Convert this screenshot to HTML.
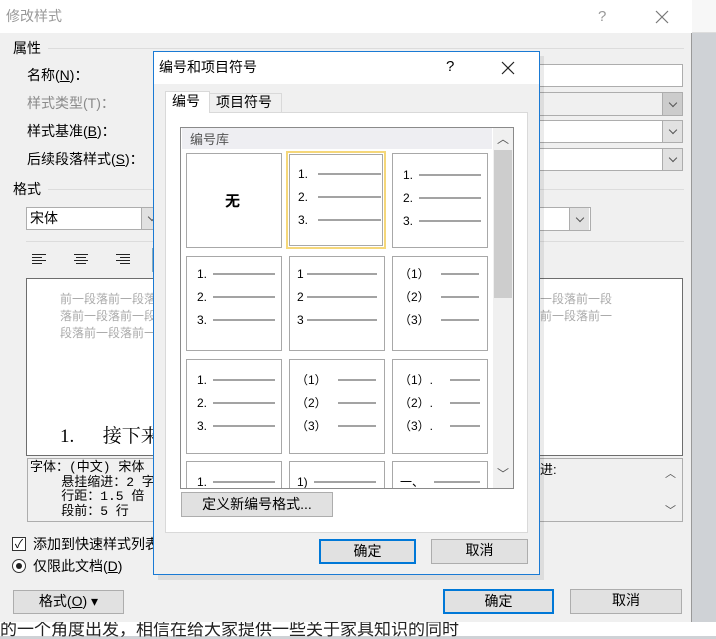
<!DOCTYPE html>
<html><head><meta charset="utf-8"><style>
*{margin:0;padding:0;box-sizing:border-box}
body{width:716px;height:636px;position:relative;overflow:hidden;background:#cfd2d6;font-family:"Liberation Sans","Noto Sans CJK SC",sans-serif;font-size:14px;color:#000}
.a{position:absolute}
.t{position:absolute;white-space:nowrap;line-height:17px}
.box{position:absolute;background:#fff;border:1px solid #7a7a7a}
.dd{position:absolute;width:20px;border-left:1px solid #adadad;background:#e1e1e1;display:flex;align-items:center;justify-content:center}
.dd:after{content:"";width:5px;height:5px;border-right:1px solid #555;border-bottom:1px solid #555;transform:rotate(45deg);margin-top:-3px}
.btn{position:absolute;background:#e1e1e1;border:1px solid #adadad;text-align:center;line-height:21px}
.cell{position:absolute;width:96px;height:95px;border:1px solid #a8a8a8;background:#fff}
.cell .n{position:absolute;left:10px;font-size:12px;line-height:14px}
.cell .l{position:absolute;height:2px;background:#a3a3a3}
.al{position:absolute;height:1px;background:#222}
</style></head><body>
<div class="a" style="left:692px;top:0;width:24px;height:33px;background:#f7f7f7;border-bottom:1px solid #ddd"></div>
<div class="a" style="left:0;top:622px;width:716px;height:14px;background:#fff"></div>
<div class="t" style="left:0;top:621px;font-size:17px;color:#222">的一个角度出发，相信在给大家提供一些关于家具知识的同时</div>
<div class="a" style="left:0;top:0;width:692px;height:622px;background:#f0f0f0;border-right:1px solid #999"></div>
<div class="a" style="left:0;top:0;width:692px;height:33px;background:#fff"></div>
<div class="t" style="left:6px;top:8px;font-size:14px;color:#999">修改样式</div>
<div class="t" style="left:598px;top:8px;font-size:15px;color:#999">?</div>
<svg class="a" style="left:655px;top:10px" width="14" height="14"><path d="M1 1L13 13M13 1L1 13" stroke="#777" stroke-width="1.2"/></svg>
<div class="t" style="left:13px;top:40px">属性</div>
<div class="a" style="left:48px;top:48px;width:636px;height:1px;background:#dcdcdc"></div>
<div class="t" style="left:27px;top:67px">名称(<u>N</u>)：</div>
<div class="t" style="left:27px;top:95px;color:#8a8a8a">样式类型(T)：</div>
<div class="t" style="left:27px;top:123px">样式基准(<u>B</u>)：</div>
<div class="t" style="left:27px;top:151px">后续段落样式(<u>S</u>)：</div>
<div class="box" style="left:530px;top:64px;width:153px;height:23px;border-color:#adadad"></div>
<div class="box" style="left:530px;top:92px;width:153px;height:24px;border-color:#adadad;background:#f0f0f0"></div>
<div class="dd" style="left:662px;top:93px;height:22px;background:#ccc"></div>
<div class="box" style="left:530px;top:120px;width:153px;height:23px;border-color:#adadad"></div>
<div class="dd" style="left:662px;top:121px;height:21px"></div>
<div class="box" style="left:530px;top:148px;width:153px;height:23px;border-color:#adadad"></div>
<div class="dd" style="left:662px;top:149px;height:21px"></div>
<div class="t" style="left:13px;top:181px">格式</div>
<div class="a" style="left:48px;top:189px;width:636px;height:1px;background:#dcdcdc"></div>
<div class="box" style="left:26px;top:207px;width:132px;height:23px;border-color:#adadad"></div>
<div class="t" style="left:30px;top:210px">宋体</div>
<div class="dd" style="left:141px;top:208px;height:21px"></div>
<div class="box" style="left:530px;top:207px;width:61px;height:24px;border-color:#adadad"></div>
<div class="dd" style="left:569px;top:208px;height:22px"></div>
<div class="a" style="left:26px;top:241px;width:658px;height:1px;background:#dcdcdc"></div>
<div class="al" style="left:32px;top:254px;width:14px"></div><div class="al" style="left:32px;top:257px;width:10px"></div><div class="al" style="left:32px;top:260px;width:14px"></div><div class="al" style="left:32px;top:263px;width:10px"></div>
<div class="al" style="left:74px;top:254px;width:14px"></div><div class="al" style="left:76px;top:257px;width:10px"></div><div class="al" style="left:74px;top:260px;width:14px"></div><div class="al" style="left:76px;top:263px;width:10px"></div>
<div class="al" style="left:116px;top:254px;width:14px"></div><div class="al" style="left:120px;top:257px;width:10px"></div><div class="al" style="left:116px;top:260px;width:14px"></div><div class="al" style="left:120px;top:263px;width:10px"></div>
<div class="a" style="left:152px;top:248px;width:4px;height:24px;background:#cde4f7;border:1px solid #8ab"></div>
<div class="box" style="left:26px;top:278px;width:657px;height:178px;border-color:#6d6d6d"></div>
<div class="t" style="left:60px;top:291px;font-size:12px;color:#aaa;line-height:17px">前一段落前一段落<br>落前一段落前一段<br>段落前一段落前一</div>
<div class="t" style="left:540px;top:291px;font-size:12px;color:#aaa;line-height:17px">一段落前一段<br>前一段落前一</div>
<div class="t" style="left:60px;top:425px;font-size:19px;font-family:'Liberation Serif','Noto Serif CJK SC',serif;line-height:24px">1.&nbsp;&nbsp;&nbsp;&nbsp;&nbsp;&nbsp;接下来</div>
<div class="box" style="left:27px;top:458px;width:656px;height:64px;border-color:#adadad;background:#f0f0f0"></div>
<div class="t" style="left:30px;top:461px;font-size:13px;line-height:14.5px;font-family:'Liberation Mono','Noto Sans CJK SC',monospace">字体：(中文) 宋体<br>&nbsp;&nbsp;&nbsp;&nbsp;悬挂缩进：2 字<br>&nbsp;&nbsp;&nbsp;&nbsp;行距：1.5 倍<br>&nbsp;&nbsp;&nbsp;&nbsp;段前：5 行</div>
<div class="t" style="left:540px;top:461px;font-size:13px">进:</div>
<div class="t" style="left:665px;top:466px;font-size:11px;color:#555">︿</div>
<div class="t" style="left:665px;top:503px;font-size:11px;color:#555">﹀</div>
<div class="a" style="left:12px;top:537px;width:14px;height:14px;border:1px solid #333;background:#fff;font-size:12px;line-height:12px;text-align:center">✓</div>
<div class="t" style="left:33px;top:536px">添加到快速样式列表</div>
<div class="a" style="left:12px;top:559px;width:14px;height:14px;border:1px solid #333;border-radius:50%;background:#fff"><div class="a" style="left:3px;top:3px;width:6px;height:6px;border-radius:50%;background:#222"></div></div>
<div class="t" style="left:33px;top:558px">仅限此文档(<u>D</u>)</div>
<div class="btn" style="left:13px;top:590px;width:111px;height:24px">格式(<u>O</u>) ▾</div>
<div class="btn" style="left:443px;top:589px;width:111px;height:25px;border:2px solid #0078d7">确定</div>
<div class="btn" style="left:570px;top:589px;width:112px;height:25px">取消</div>
<div class="a" style="left:158px;top:56px;width:386px;height:524px;background:rgba(0,0,0,0.08)"></div>
<div class="a" style="left:153px;top:51px;width:387px;height:524px;background:#f0f0f0;border:1px solid #1a7ad4"></div>
<div class="a" style="left:154px;top:52px;width:385px;height:32px;background:#fff"></div>
<div class="t" style="left:159px;top:59px;font-size:14px">编号和项目符号</div>
<div class="t" style="left:446px;top:58px;font-size:15px">?</div>
<svg class="a" style="left:501px;top:61px" width="14" height="14"><path d="M1 1L13 13M13 1L1 13" stroke="#222" stroke-width="1.2"/></svg>
<div class="a" style="left:165px;top:112px;width:363px;height:421px;background:#fff;border:1px solid #d9d9d9"></div>
<div class="a" style="left:209px;top:93px;width:73px;height:20px;background:#f0f0f0;border:1px solid #d9d9d9"></div>
<div class="t" style="left:216px;top:94px;font-size:14px">项目符号</div>
<div class="a" style="left:165px;top:91px;width:45px;height:22px;background:#fff;border:1px solid #d9d9d9;border-bottom:none"></div>
<div class="t" style="left:172px;top:93px;font-size:14px">编号</div>
<div class="a" style="left:180px;top:127px;width:334px;height:362px;background:#fff;border:1px solid #8a8a8a;overflow:hidden">
 <div class="a" style="left:1px;top:0;width:310px;height:21px;background:#eeeef2"></div>
 <div class="t" style="left:9px;top:3px;font-size:13px;color:#555">编号库</div>
 <div class="a" style="left:312px;top:0;width:20px;height:360px;background:#f0f0f0"></div>
 <div class="a" style="left:313px;top:22px;width:18px;height:148px;background:#cdcdcd"></div>
 <div class="t" style="left:316px;top:3px;font-size:12px;color:#555">︿</div>
 <div class="t" style="left:316px;top:338px;font-size:12px;color:#555">﹀</div>
</div>
<div class="a" style="left:181px;top:128px;width:310px;height:360px;overflow:hidden">
 <div class="cell" style="left:5px;top:25px;"><div class="t" style="left:38px;top:39px;font-size:15px;font-weight:bold">无</div></div>
 <div class="cell" style="left:105px;top:23px;width:100px;height:98px;border:2px solid #f5d77a;box-shadow:inset 0 0 0 1px #fff,inset 0 0 0 2px #a8a8a8"></div>
 <div class="cell" style="left:107px;top:25px;border:none;background:transparent">
  <div class="n" style="top:14px">1.</div><div class="l" style="left:30px;top:20px;width:63px"></div>
  <div class="n" style="top:37px">2.</div><div class="l" style="left:30px;top:43px;width:63px"></div>
  <div class="n" style="top:60px">3.</div><div class="l" style="left:30px;top:66px;width:63px"></div></div>
 <div class="cell" style="left:211px;top:25px">
  <div class="n" style="top:14px">1.</div><div class="l" style="left:26px;top:20px;width:62px"></div>
  <div class="n" style="top:37px">2.</div><div class="l" style="left:26px;top:43px;width:62px"></div>
  <div class="n" style="top:60px">3.</div><div class="l" style="left:26px;top:66px;width:62px"></div></div>
 <div class="cell" style="left:5px;top:128px">
  <div class="n" style="top:10px">1.</div><div class="l" style="left:26px;top:16px;width:62px"></div>
  <div class="n" style="top:33px">2.</div><div class="l" style="left:26px;top:39px;width:62px"></div>
  <div class="n" style="top:56px">3.</div><div class="l" style="left:26px;top:62px;width:62px"></div></div>
 <div class="cell" style="left:108px;top:128px">
  <div class="n" style="top:10px;left:7px">1</div><div class="l" style="left:17px;top:16px;width:70px"></div>
  <div class="n" style="top:33px;left:7px">2</div><div class="l" style="left:17px;top:39px;width:70px"></div>
  <div class="n" style="top:56px;left:7px">3</div><div class="l" style="left:17px;top:62px;width:70px"></div></div>
 <div class="cell" style="left:211px;top:128px">
  <div class="n" style="top:10px;left:6px">（1）</div><div class="l" style="left:48px;top:16px;width:38px"></div>
  <div class="n" style="top:33px;left:6px">（2）</div><div class="l" style="left:48px;top:39px;width:38px"></div>
  <div class="n" style="top:56px;left:6px">（3）</div><div class="l" style="left:48px;top:62px;width:38px"></div></div>
 <div class="cell" style="left:5px;top:231px">
  <div class="n" style="top:13px">1.</div><div class="l" style="left:26px;top:19px;width:62px"></div>
  <div class="n" style="top:36px">2.</div><div class="l" style="left:26px;top:42px;width:62px"></div>
  <div class="n" style="top:59px">3.</div><div class="l" style="left:26px;top:65px;width:62px"></div></div>
 <div class="cell" style="left:108px;top:231px">
  <div class="n" style="top:13px;left:6px">（1）</div><div class="l" style="left:48px;top:19px;width:38px"></div>
  <div class="n" style="top:36px;left:6px">（2）</div><div class="l" style="left:48px;top:42px;width:38px"></div>
  <div class="n" style="top:59px;left:6px">（3）</div><div class="l" style="left:48px;top:65px;width:38px"></div></div>
 <div class="cell" style="left:211px;top:231px">
  <div class="n" style="top:13px;left:6px">（1）.</div><div class="l" style="left:57px;top:19px;width:30px"></div>
  <div class="n" style="top:36px;left:6px">（2）.</div><div class="l" style="left:57px;top:42px;width:30px"></div>
  <div class="n" style="top:59px;left:6px">（3）.</div><div class="l" style="left:57px;top:65px;width:30px"></div></div>
 <div class="cell" style="left:5px;top:333px">
  <div class="n" style="top:13px">1.</div><div class="l" style="left:26px;top:19px;width:62px"></div></div>
 <div class="cell" style="left:108px;top:333px">
  <div class="n" style="top:13px;left:7px">1)</div><div class="l" style="left:24px;top:19px;width:62px"></div></div>
 <div class="cell" style="left:211px;top:333px">
  <div class="n" style="top:13px;left:7px">一、</div><div class="l" style="left:41px;top:19px;width:46px"></div></div>
</div>
<div class="btn" style="left:181px;top:492px;width:152px;height:25px;line-height:23px">定义新编号格式...</div>
<div class="btn" style="left:319px;top:539px;width:97px;height:25px;border:2px solid #0078d7">确定</div>
<div class="btn" style="left:431px;top:539px;width:97px;height:25px">取消</div>
</body></html>
